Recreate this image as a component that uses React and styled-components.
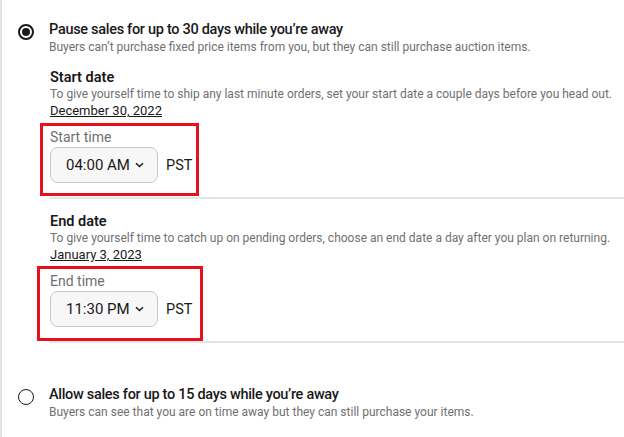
import styled, { createGlobalStyle } from "styled-components";

// GLOBAL //////////////////////////////////////////////////////////////
const GlobalStyle = createGlobalStyle`
  html, body {
    margin: 0;
    padding: 0;
    background: #ffffff;
  }
  body {
    font-family: Roboto, "Liberation Sans", Arial, sans-serif;
    color: #191919;
  }
`;

// DATA ////////////////////////////////////////////////////////////////
const sections = [
  {
    title: "Start date",
    hint: "To give yourself time to ship any last minute orders, set your start date a couple days before you head out.",
    date: "December 30, 2022",
    label: "Start time",
    time: "04:00 AM",
    mark: { top: -5, right: -7, bottom: -13, left: -10 },
  },
  {
    title: "End date",
    hint: "To give yourself time to catch up on pending orders, choose an end date a day after you plan on returning.",
    date: "January 3, 2023",
    label: "End time",
    time: "11:30 PM",
    mark: { top: -6, right: -11, bottom: -14, left: -13 },
  },
];

const Chevron = () => (
  <svg width="9" height="6" viewBox="0 0 9 6" fill="none">
    <path d="M1 1.2L4.5 4.6L8 1.2" stroke="#191919" strokeWidth="1.4" />
  </svg>
);

const App = () => {
  return (
    <>
      <GlobalStyle />
      <Page>
        <Option>
          <Radio $checked />
          <OptionBody>
            <OptionTitle>Pause sales for up to 30 days while you’re away</OptionTitle>
            <Hint>Buyers can’t purchase fixed price items from you, but they can still purchase auction items.</Hint>
            {sections.map((s) => (
              <DateSection key={s.title}>
                <SectionTitle>{s.title}</SectionTitle>
                <Hint>{s.hint}</Hint>
                <DateLink href="#">{s.date}</DateLink>
                <Field>
                  <FieldLabel>{s.label}</FieldLabel>
                  <TimeRow>
                    <TimeSelect>
                      <span>{s.time}</span>
                      <Chevron />
                    </TimeSelect>
                    <Zone>PST</Zone>
                  </TimeRow>
                  <Mark $inset={s.mark} />
                </Field>
              </DateSection>
            ))}
          </OptionBody>
        </Option>
        <Option $spaced>
          <Radio />
          <OptionBody>
            <OptionTitle>Allow sales for up to 15 days while you’re away</OptionTitle>
            <Hint>Buyers can see that you are on time away but they can still purchase your items.</Hint>
          </OptionBody>
        </Option>
      </Page>
    </>
  );
};

export default App;

// STYLED COMPONENTS ///////////////////////////////////////////////////

const Page = styled.div`
  height: 437px;
  overflow: hidden;
  box-sizing: border-box;
  border-left: 2px solid #e4e4e4;
  padding-top: 21px;
`;

const Option = styled.div`
  display: flex;
  align-items: flex-start;
  margin-top: ${(p) => (p.$spaced ? "43px" : "0")};
`;

const Radio = styled.span`
  flex: none;
  box-sizing: border-box;
  width: 16px;
  height: 16px;
  margin: 3px 15px 0 16px;
  border-radius: 50%;
  border: ${(p) => (p.$checked ? "2px solid #191919" : "1.5px solid #191919")};
  display: flex;
  align-items: center;
  justify-content: center;
  &::after {
    content: "";
    display: ${(p) => (p.$checked ? "block" : "none")};
    width: 8px;
    height: 8px;
    border-radius: 50%;
    background: #191919;
  }
`;

const OptionBody = styled.div`
  flex: 1;
  display: flex;
  flex-direction: column;
  align-items: flex-start;
`;

const OptionTitle = styled.div`
  font-size: 14.5px;
  line-height: 18px;
  font-weight: 500;
  letter-spacing: -0.3px;
  color: #191919;
`;

const Hint = styled.div`
  font-size: 12px;
  line-height: 16px;
  color: #707070;
  white-space: nowrap;
`;

const DateSection = styled.div`
  align-self: stretch;
  display: flex;
  flex-direction: column;
  align-items: flex-start;
  padding: 14px 0 14px 1px;
  border-bottom: 2px solid #e5e5e5;
`;

const SectionTitle = styled.div`
  font-size: 14.5px;
  line-height: 17px;
  font-weight: 600;
  color: #191919;
`;

const DateLink = styled.a`
  font-size: 13px;
  line-height: 17px;
  color: #191919;
  text-decoration: underline;
`;

const Field = styled.div`
  position: relative;
  width: 142px;
  margin-top: 9px;
  display: flex;
  flex-direction: column;
  align-items: flex-start;
`;

const FieldLabel = styled.div`
  font-size: 14px;
  line-height: 18px;
  color: #707070;
  margin-bottom: 1px;
`;

const TimeRow = styled.div`
  display: flex;
  align-items: center;
  gap: 8px;
`;

const TimeSelect = styled.div`
  box-sizing: border-box;
  width: 108px;
  height: 36px;
  padding: 0 13px 0 15px;
  display: flex;
  align-items: center;
  justify-content: space-between;
  background: #f7f7f7;
  border: 1px solid #c7c7c7;
  border-radius: 8px;
  font-size: 15px;
  color: #191919;
`;

const Zone = styled.span`
  font-size: 14.5px;
  color: #191919;
`;

const Mark = styled.div`
  position: absolute;
  top: ${(p) => p.$inset.top}px;
  right: ${(p) => p.$inset.right}px;
  bottom: ${(p) => p.$inset.bottom}px;
  left: ${(p) => p.$inset.left}px;
  border: 3px solid #e8101c;
  pointer-events: none;
`;
